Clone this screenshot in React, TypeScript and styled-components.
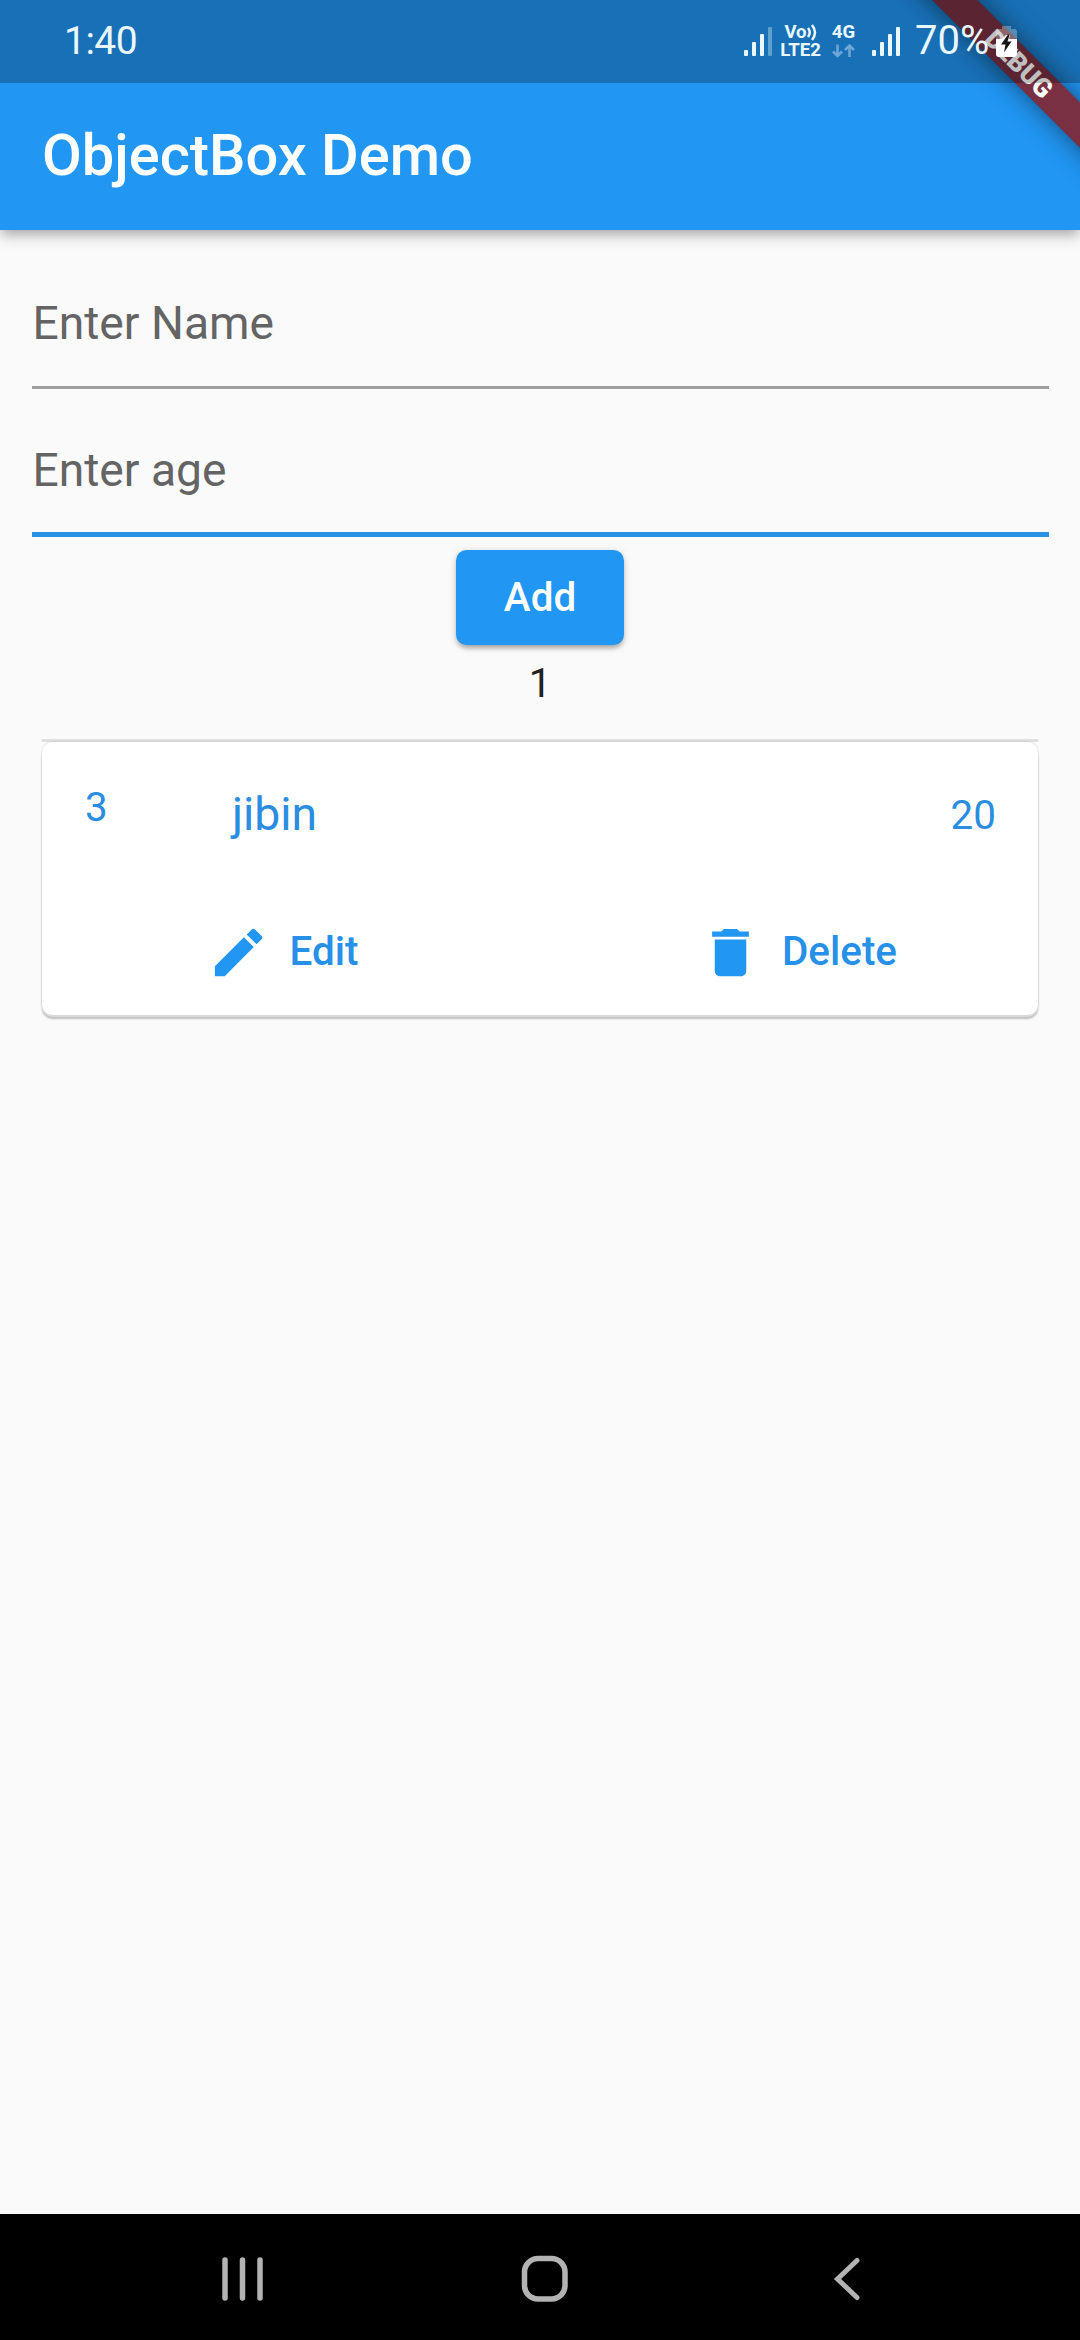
import React from "react";
import styled, { createGlobalStyle } from "styled-components";

const Global = createGlobalStyle`
  * { box-sizing: border-box; }
  body { margin: 0; background: #fafafa; }
  svg { flex: none; display: block; }
`;

const Screen = styled.div`
  width: 1080px;
  height: 2340px;
  display: flex;
  flex-direction: column;
  position: relative;
  overflow: hidden;
  background: #fafafa;
  font-family: Roboto, "Noto Sans", sans-serif;
  font-size: 40.4px;
  color: #212121;
`;

const Header = styled.header`
  flex: none;
  background: #2196f3;
  box-shadow: 0 5px 10px -2px rgba(0, 0, 0, 0.2), 0 10px 13px rgba(0, 0, 0, 0.07),
    0 3px 16px rgba(0, 0, 0, 0.12);
`;

/* The scrim also dims the part of the debug ribbon that runs beneath it. */
const StatusBar = styled.div`
  position: relative;
  z-index: 3;
  height: 83px;
  display: flex;
  align-items: center;
  justify-content: space-between;
  padding: 0 63px 0 64px;
  background: rgba(0, 0, 0, 0.25);
  color: #e9f8ff;
`;

const Clock = styled.span`
  margin-top: -2px;
  font-size: 39px;
  line-height: 48px;
  letter-spacing: -0.5px;
`;

const StatusIcons = styled.div`
  display: flex;
  align-items: center;
  height: 83px;
`;

const StackedLabel = styled.div<{ $left: number; $right?: number; $width: number }>`
  display: flex;
  flex-direction: column;
  align-items: center;
  flex: none;
  gap: 1px;
  margin: 0 ${(p) => p.$right ?? 0}px 0 ${(p) => p.$left}px;
  width: ${(p) => p.$width}px;
  font-size: 18.6px;
  line-height: 17px;
  font-weight: 700;
  white-space: nowrap;
`;

const VoRow = styled.span`
  display: flex;
  align-items: center;
`;

const Percent = styled.span`
  margin: -2px 4px 0 15px;
  width: 77px;
  font-size: 40px;
  line-height: 48px;
  white-space: nowrap;
`;

const AppBar = styled.div`
  height: 147px;
  display: flex;
  align-items: center;
  padding: 0 42px 4px;
`;

const Title = styled.h1`
  margin: 0;
  font-size: 57.75px;
  font-weight: 500;
  line-height: 68px;
  color: #fff;
`;

const Body = styled.main`
  flex: 1;
  display: flex;
  flex-direction: column;
  align-items: center;
  padding: 12px 31.5px 0;
`;

const Field = styled.div<{ $focused?: boolean }>`
  width: 100%;
  height: ${(p) => (p.$focused ? 148 : 147)}px;
  flex: none;
  padding: 54px 0 0 1px;
  border-bottom: ${(p) => (p.$focused ? "5px solid #2a93e6" : "3px solid #9e9e9e")};
  font-size: 46.2px;
  line-height: 54px;
  color: #646464;
`;

const AddButton = styled.button`
  width: 168px;
  height: 95px;
  flex: none;
  margin: 13px 0 0;
  padding: 0;
  border: 0;
  border-radius: 10.5px;
  background: #2196f3;
  color: #fff;
  font: 500 40.4px/48px Roboto, sans-serif;
  box-shadow: 0 5px 5px -3px rgba(0, 0, 0, 0.2), 0 3px 5px rgba(0, 0, 0, 0.14),
    0 2px 10px rgba(0, 0, 0, 0.12);
`;

const Count = styled.div`
  margin-top: 15px;
  line-height: 48px;
`;

const List = styled.section`
  width: 996px;
  margin-top: 31px;
  border-top: 3px solid #dfdfdf;
`;

const Card = styled.article`
  height: 273px;
  border-radius: 10.5px;
  background: #fff;
  color: #2a8de0;
  box-shadow: 0 2px 0 #dadada, 0 4px 2px rgba(0, 0, 0, 0.24), 0 0 2px rgba(0, 0, 0, 0.2);
`;

const Tile = styled.div`
  height: 147px;
  display: flex;
  padding: 42px 42px 0;
`;

const Leading = styled.span`
  width: 147px;
  padding-left: 1px;
  line-height: 48px;
`;

const Name = styled.span`
  flex: 1;
  padding: 3px 0 0 1px;
  font-size: 46.2px;
  line-height: 54px;
`;

const Age = styled.span`
  padding-top: 8px;
  line-height: 48px;
`;

const Actions = styled.div`
  display: flex;
  justify-content: space-between;
  padding: 0 141px 0 165px;
`;

const Action = styled.button`
  height: 126px;
  display: flex;
  align-items: center;
  gap: 19.5px;
  padding: 0;
  border: 0;
  background: none;
  color: #2790e8;
  font: 500 40.4px/48px Roboto, sans-serif;
`;

const ActionLabel = styled.span`
  margin-top: -1px;
`;

const NavBar = styled.nav`
  height: 126px;
  flex: none;
  background: #000;
  display: flex;
  justify-content: space-between;
  align-items: center;
  padding: 4px 203px 0 213px;
`;

const DebugCorner = styled.div`
  position: absolute;
  top: 0;
  right: 0;
  width: 240px;
  height: 230px;
  overflow: hidden;
  z-index: 2;
`;

const DebugRibbon = styled.div`
  position: absolute;
  left: 17.6px;
  top: 46.6px;
  width: 320px;
  height: 31.5px;
  padding-left: 3px;
  display: flex;
  align-items: center;
  justify-content: center;
  transform: rotate(45deg);
  background: linear-gradient(rgba(183, 28, 28, 0.63), rgba(183, 28, 28, 0.63)), rgba(0, 0, 0, 0.45);
  box-shadow: 0 0 26px rgba(0, 0, 0, 0.5);
  color: #fff;
  font-size: 26.2px;
  font-weight: 900;
`;

function Signal({ weak = false }: { weak?: boolean }) {
  return (
    <svg width="28" height="29" viewBox="0 0 28 29" fill="#e9f8ff">
      <rect x="0" y="23" width="4" height="6" rx="1" />
      <rect x="8" y="15" width="4" height="14" rx="1" />
      <rect x="16" y="7" width="4" height="22" rx="1" />
      <rect x="24" y="0" width="4" height="29" rx="1" opacity={weak ? 0.35 : 1} />
    </svg>
  );
}

function Battery() {
  return (
    <svg width="21" height="31" viewBox="0 0 21 31">
      <path d="M6 0h9v3h3q3 0 3 3v7H0V6q0-3 3-3h3z" fill="#fff" opacity=".3" />
      <path d="M0 13h6l4-4h4l-1 4h8v15q0 3-3 3H3q-3 0-3-3z" fill="#fff" />
      <path d="M12 8.500L5 18.500h4.500L8 26.500 15.500 15.500H11.500L13.500 9z" fill="#151515" />
    </svg>
  );
}

export default function App() {
  return (
    <Screen>
      <Global />
      <Header>
        <StatusBar>
          <Clock>1:40</Clock>
          <StatusIcons>
            <Signal weak />
            <StackedLabel $left={7} $width={43}>
              <VoRow>
                Vo
                <svg width="10" height="17" viewBox="0 0 10 17" fill="none" stroke="#e9f8ff" strokeWidth="2.500">
                  <path d="M1 4Q4.500 8.500 1 13M5 1Q11 8.500 5 16" />
                </svg>
              </VoRow>
              <span>LTE2</span>
            </StackedLabel>
            <StackedLabel $left={9} $right={16} $width={25}>
              <span>4G</span>
              <svg width="24" height="17" viewBox="0 0 24 17" fill="none" stroke="#6fa8d8" strokeWidth="2.500">
                <path d="M5.500 2.500V14M1 9.500L5.500 14L10 9.500M17.500 15V4M13 8L17.500 3.500L22 8" />
              </svg>
            </StackedLabel>
            <Signal />
            <Percent>70%</Percent>
            <Battery />
          </StatusIcons>
        </StatusBar>
        <AppBar>
          <Title>ObjectBox Demo</Title>
        </AppBar>
      </Header>
      <Body>
        <Field>Enter Name</Field>
        <Field $focused>Enter age</Field>
        <AddButton>Add</AddButton>
        <Count>1</Count>
        <List>
          <Card>
            <Tile>
              <Leading>3</Leading>
              <Name>jibin</Name>
              <Age>20</Age>
            </Tile>
            <Actions>
              <Action>
                <svg width="63" height="63" viewBox="0 0 24 24" fill="#2196f3">
                  <path d="M3 17.250V21h3.750L17.810 9.940l-3.750-3.750L3 17.250zM20.710 7.040c.39-.39.39-1.020 0-1.410l-2.340-2.340c-.39-.39-1.020-.39-1.410 0l-1.830 1.830 3.750 3.750 1.830-1.830z" />
                </svg>
                <ActionLabel>Edit</ActionLabel>
              </Action>
              <Action>
                <svg width="63" height="63" viewBox="0 0 24 24" fill="#2196f3">
                  <path d="M6 19c0 1.100.9 2 2 2h8c1.100 0 2-.9 2-2V7H6v12zM19 4h-3.500l-1-1h-5l-1 1H5v2h14V4z" />
                </svg>
                <ActionLabel>Delete</ActionLabel>
              </Action>
            </Actions>
          </Card>
        </List>
      </Body>
      <NavBar>
        <svg width="60" height="60" viewBox="0 0 60 60" stroke="#b3b3b3" strokeWidth="5.500" strokeLinecap="round">
          <path d="M12 11V49M29.500 11V49M47 11V49" />
        </svg>
        <svg width="60" height="60" viewBox="0 0 60 60" fill="none" stroke="#b3b3b3" strokeWidth="5.500">
          <rect x="9.500" y="9.500" width="40.500" height="40.500" rx="13.500" />
        </svg>
        <svg width="60" height="60" viewBox="0 0 60 60" fill="none" stroke="#b3b3b3" strokeWidth="5" strokeLinecap="round">
          <path d="M40 11.500L20.500 30L40 48.500" />
        </svg>
      </NavBar>
      <DebugCorner>
        <DebugRibbon>DEBUG</DebugRibbon>
      </DebugCorner>
    </Screen>
  );
}
